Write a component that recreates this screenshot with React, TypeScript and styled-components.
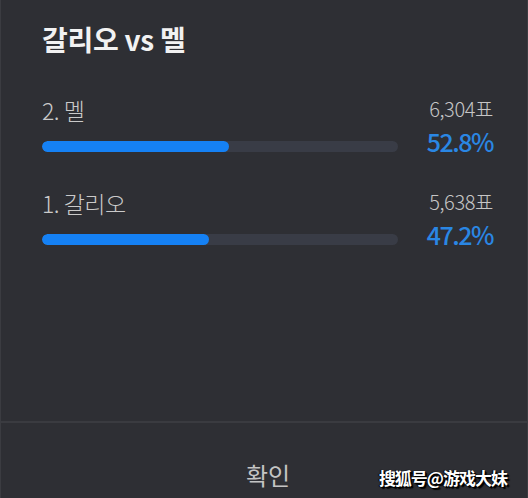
import React from "react";
import styled, { createGlobalStyle } from "styled-components";

const Global = createGlobalStyle`
  html, body { margin: 0; padding: 0; background: #2e2f34; }
  body { font-family: "Noto Sans CJK KR", "Noto Sans", sans-serif; }
`;

const Dialog = styled.div`
  position: relative;
  width: 528px;
  height: 498px;
  box-sizing: border-box;
  background: #2e2f34;
  border-left: 1px solid #3b3c41;
  border-right: 1px solid #3b3c41;
  display: flex;
  flex-direction: column;
  overflow: hidden;
`;

const Content = styled.div`
  flex: 1;
  padding: 19px 34px 0 41px;
  display: flex;
  flex-direction: column;
`;

const Title = styled.h1`
  margin: 0;
  font-size: 28px;
  font-weight: 700;
  line-height: 40px;
  color: #f2f2f2;
  letter-spacing: -0.3px;
`;

const List = styled.div`
  margin-top: 34px;
  display: flex;
  flex-direction: column;
  gap: 30px;
`;

const Row = styled.div`
  display: flex;
  align-items: flex-start;
`;

const Left = styled.div`
  width: 356px;
  display: flex;
  flex-direction: column;
`;

const Label = styled.div`
  font-size: 23px;
  font-weight: 300;
  line-height: 34px;
  color: #cacaca;
  letter-spacing: -0.5px;
`;

const Track = styled.div`
  margin-top: 14px;
  height: 11px;
  border-radius: 6px;
  background: #393c46;
  overflow: hidden;
`;

const Fill = styled.div`
  height: 100%;
  border-radius: 6px;
  background: #1581f4;
`;

const Right = styled.div`
  margin-left: auto;
  display: flex;
  flex-direction: column;
  align-items: flex-end;
`;

const Votes = styled.div`
  margin-top: 2px;
  font-size: 20px;
  font-weight: 300;
  line-height: 28px;
  color: #c6c6c6;
  letter-spacing: -0.4px;
`;

const Percent = styled.div`
  margin-top: 3px;
  font-size: 25px;
  font-weight: 500;
  line-height: 30px;
  color: #2a87e4;
  letter-spacing: -1.5px;
`;

const Footer = styled.div`
  height: 77px;
  border-top: 2px solid #3a3b40;
  display: flex;
  justify-content: center;
  padding-top: 35px;
  box-sizing: border-box;
`;

const Confirm = styled.button`
  background: none;
  border: none;
  padding: 0;
  margin-left: 8px;
  font-family: "Noto Sans CJK KR", "Noto Sans", sans-serif;
  font-size: 24px;
  font-weight: 400;
  line-height: 34px;
  height: 34px;
  color: #c4c4c4;
`;

const Watermark = styled.div`
  position: absolute;
  right: 20px;
  bottom: 8px;
  font-family: "Noto Sans CJK SC", sans-serif;
  font-size: 17px;
  font-weight: 700;
  line-height: 24px;
  color: #ffffff;
  letter-spacing: -1px;
  text-shadow: 1px 1px 0 #000, 2px 2px 1px #000, -1px 0 1px #000;
`;

const data = [
  { label: "2. 멜", votes: "6,304표", pct: 52.8, width: 187 },
  { label: "1. 갈리오", votes: "5,638표", pct: 47.2, width: 167 },
];

export default function App() {
  return (
    <>
      <Global />
      <Dialog>
        <Content>
          <Title>갈리오 vs 멜</Title>
          <List>
            {data.map((d) => (
              <Row key={d.label}>
                <Left>
                  <Label>{d.label}</Label>
                  <Track>
                    <Fill style={{ width: `${d.width}px` }} />
                  </Track>
                </Left>
                <Right>
                  <Votes>{d.votes}</Votes>
                  <Percent>{d.pct.toFixed(1)}%</Percent>
                </Right>
              </Row>
            ))}
          </List>
        </Content>
        <Footer>
          <Confirm>확인</Confirm>
        </Footer>
        <Watermark>搜狐号@游戏大妹</Watermark>
      </Dialog>
    </>
  );
}
